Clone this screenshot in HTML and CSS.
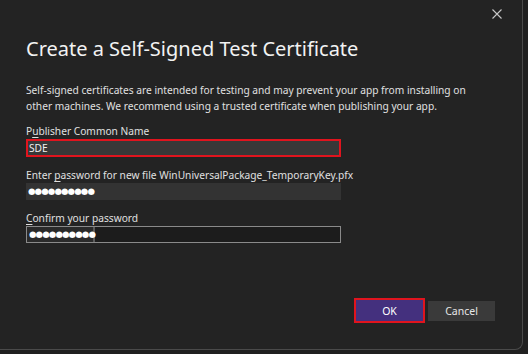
FILE: index.html
```html
<!DOCTYPE html>
<html lang="en">
<head>
  <meta charset="UTF-8" />
  <title>Create a Self-Signed Test Certificate</title>
  <link rel="stylesheet" href="styles.css">
</head>
<body>
  <div class="dialog">
    <div class="titlebar">
      <svg class="close" viewBox="0 0 10 10" width="10" height="10">
        <path d="M0.5 0.5 L9.5 9.5 M9.5 0.5 L0.5 9.5" stroke="#c8c8c8" stroke-width="1.1" fill="none"/>
      </svg>
    </div>

    <h1>Create a Self-Signed Test Certificate</h1>

    <p class="intro">Self-signed certificates are intended for testing and may prevent your app from installing on other machines. We recommend using a trusted certificate when publishing your app.</p>

    <div class="field">
      <label>P<u>u</u>blisher Common Name</label>
      <div class="input focused">SDE</div>
    </div>

    <div class="field">
      <label>Enter <u>p</u>assword for new file WinUniversalPackage_TemporaryKey.pfx</label>
      <div class="input"><span class="dots">&#9679;&#9679;&#9679;&#9679;&#9679;&#9679;&#9679;&#9679;&#9679;&#9679;</span></div>
    </div>

    <div class="field">
      <label><u>C</u>onfirm your password</label>
      <div class="input outlined"><span class="typed dots">&#9679;&#9679;&#9679;&#9679;&#9679;&#9679;&#9679;&#9679;&#9679;&#9679;</span></div>
    </div>

    <div class="buttons">
      <button class="btn primary">OK</button>
      <button class="btn">Cancel</button>
    </div>
  </div>
</body>
</html>
```

FILE: styles.css
```css
body {
  margin: 0;
  background: #202020;
  font-family: "Segoe UI", "Noto Sans", sans-serif;
  color: #e6e6e6;
}
.dialog {
  width: 523px;
  height: 350px;
  box-sizing: border-box;
  background: #232323;
  border-right: 1px solid #4a4a4a;
  border-bottom: 1px solid #4a4a4a;
  border-bottom-right-radius: 8px;
  padding: 0 26px;
  display: flex;
  flex-direction: column;
}
.titlebar {
  height: 28px;
  display: flex;
  justify-content: flex-end;
  align-items: center;
  margin-right: -6px;
}
.close {
  display: block;
}
h1 {
  margin: 7px 0 0;
  font-weight: normal;
  font-size: 20px;
  line-height: 28px;
  color: #f2f2f2;
}
.intro {
  margin: 19px 0 0;
  max-width: 440px;
  font-size: 10.2px;
  line-height: 16px;
  color: #e0e0e0;
}
.field {
  margin-top: 9px;
}
.field + .field {
  margin-top: 10px;
}
.field label {
  display: block;
  white-space: nowrap;
  font-size: 10.2px;
  line-height: 16px;
  color: #e0e0e0;
}
.field label u {
  text-underline-offset: 2px;
}
.input {
  width: 315px;
  height: 17px;
  box-sizing: border-box;
  background: #333333;
  font-size: 10.2px;
  line-height: 17px;
  padding: 0 2px;
  color: #f0f0f0;
  display: flex;
  align-items: center;
}
.input.focused {
  height: 18px;
  border: 2px solid #e0141e;
  background: #383838;
  padding: 0 1px;
}
.input.outlined {
  border: 1px solid #8a8a8a;
  background: #1c1c1c;
  padding: 0;
  align-items: stretch;
}
.dots {
  font-family: "DejaVu Sans", sans-serif;
  font-size: 8.6px;
  letter-spacing: -0.9px;
  color: #ffffff;
}
.typed {
  display: flex;
  align-items: center;
  width: 68px;
  padding-left: 2px;
  box-sizing: border-box;
  border-right: 2px solid #5a5a5a;
  background: #2a2a2a;
}
.buttons {
  margin-top: auto;
  margin-bottom: 26px;
  margin-right: 1px;
  display: flex;
  justify-content: flex-end;
  align-items: center;
  gap: 3px;
}
.btn {
  width: 67px;
  height: 20px;
  border: none;
  background: #3a3a3a;
  color: #e6e6e6;
  font-family: inherit;
  font-size: 10.5px;
  padding: 0;
}
.btn.primary {
  width: 71px;
  height: 25px;
  border: 2px solid #e0141e;
  background: #44307e;
  color: #ffffff;
}
```
